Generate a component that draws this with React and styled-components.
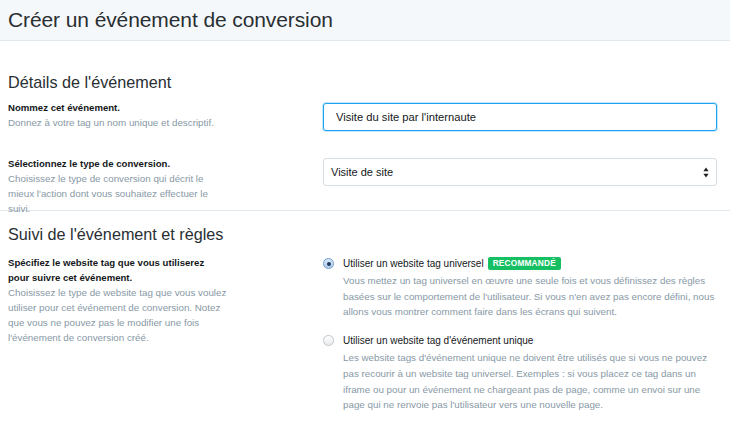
import React from 'react';
import styled, { createGlobalStyle } from 'styled-components';

const GlobalStyle = createGlobalStyle`
  html, body {
    margin: 0;
    padding: 0;
    background: #fff;
  }
  body {
    font-family: "Liberation Sans", Arial, sans-serif;
    color: #14171a;
  }
`;

const Page = styled.div`
  width: 730px;
  height: 423px;
  overflow: hidden;
  background: #fff;
`;

const Header = styled.header`
  height: 41px;
  background: #f5f8fa;
  border-bottom: 1px solid #e1e8ed;
  display: flex;
  align-items: center;
  padding: 0 8px;
  box-sizing: border-box;
`;

const Title = styled.h1`
  margin: 0;
  font-size: 21px;
  font-weight: 400;
  color: #292f33;
  letter-spacing: -0.1px;
`;

const Section = styled.section`
  padding: ${({ $top }) => $top}px 13px 0 8px;
  border-top: ${({ $divided }) => ($divided ? '1px solid #e1e8ed' : 'none')};
  height: ${({ $height }) => ($height ? `${$height}px` : 'auto')};
  box-sizing: border-box;
`;

const SectionTitle = styled.h2`
  margin: 0;
  font-size: 16.2px;
  line-height: 22px;
  font-weight: 400;
  color: #292f33;
`;

const Row = styled.div`
  display: grid;
  grid-template-columns: 315px 1fr;
  margin-top: ${({ $gap }) => $gap}px;
  height: ${({ $height }) => ($height ? `${$height}px` : 'auto')};
`;

const Info = styled.div`
  width: ${({ $width }) => $width}px;
  font-size: 9.8px;
  line-height: 15px;
`;

const Label = styled.div`
  font-weight: 700;
  font-size: 9.6px;
  color: #14171a;
  max-width: ${({ $wrap }) => ($wrap ? `${$wrap}px` : 'none')};
`;

const Hint = styled.div`
  color: #8899a6;
`;

const Field = styled.div`
  margin-top: ${({ $offset }) => $offset}px;
  position: relative;
`;

const Input = styled.input`
  width: 100%;
  height: 28px;
  box-sizing: border-box;
  border: 1px solid #1da1f2;
  border-radius: 3px;
  padding: 0 12px;
  font-family: "Liberation Sans", Arial, sans-serif;
  font-size: 11.2px;
  color: #14171a;
  background: #fff;
  outline: none;
  box-shadow: 0 0 0 1px rgba(29, 161, 242, 0.25);
`;

const SelectBox = styled.div`
  height: 28px;
  box-sizing: border-box;
  border: 1px solid #d6dee4;
  border-radius: 3px;
  padding: 0 7px;
  display: flex;
  align-items: center;
  justify-content: space-between;
  font-size: 11px;
  color: #14171a;
  background: #fff;
`;

const Arrows = styled.svg`
  width: 6px;
  height: 11px;
`;

const Options = styled.div`
  display: flex;
  flex-direction: column;
  gap: 13px;
  margin-top: 1px;
`;

const Option = styled.div`
  display: grid;
  grid-template-columns: 20px 1fr;
`;

const Radio = styled.span`
  width: 11px;
  height: 11px;
  margin-top: 2px;
  border-radius: 50%;
  box-sizing: border-box;
  display: flex;
  align-items: center;
  justify-content: center;
  border: 1px solid ${({ $checked }) => ($checked ? '#6f9fd0' : '#c4c9cd')};
  background: ${({ $checked }) =>
    $checked
      ? 'linear-gradient(#dbe9f7, #aecbeb)'
      : 'linear-gradient(#ffffff, #e8ebed)'};
  box-shadow: 0 0 1px rgba(0, 0, 0, 0.15);

  &::after {
    content: '';
    display: ${({ $checked }) => ($checked ? 'block' : 'none')};
    width: 4px;
    height: 4px;
    border-radius: 50%;
    background: #1c3a5e;
  }
`;

const OptionTitle = styled.div`
  font-size: 10px;
  line-height: 15px;
  color: #14171a;
  display: flex;
  align-items: center;
  gap: 4px;
`;

const Badge = styled.span`
  background: #17bf63;
  color: #fff;
  font-size: 8.3px;
  font-weight: 700;
  letter-spacing: 0.2px;
  line-height: 13px;
  padding: 0 5px;
  border-radius: 2px;
`;

const OptionText = styled.div`
  font-size: 9.8px;
  line-height: 15.7px;
  color: #8899a6;
  margin-top: 2px;
`;

const App = () => (
  <Page>
    <GlobalStyle />
    <Header>
      <Title>Créer un événement de conversion</Title>
    </Header>

    <Section $top={30} $height={169}>
      <SectionTitle>Détails de l'événement</SectionTitle>
      <Row $gap={7}>
        <Info $width={230}>
          <Label>Nommez cet événement.</Label>
          <Hint>Donnez à votre tag un nom unique et descriptif.</Hint>
        </Info>
        <Field $offset={3}>
          <Input defaultValue="Visite du site par l'internaute" readOnly />
        </Field>
      </Row>
      <Row $gap={25} $height={30}>
        <Info $width={215}>
          <Label>Sélectionnez le type de conversion.</Label>
          <Hint>
            Choisissez le type de conversion qui décrit le mieux l'action dont vous souhaitez
            effectuer le suivi.
          </Hint>
        </Info>
        <Field $offset={2}>
          <SelectBox>
            Visite de site
            <Arrows viewBox="0 0 6 11">
              <path d="M3 0.5 L5.6 4.3 H0.4 Z" fill="#222" />
              <path d="M3 10.5 L5.6 6.7 H0.4 Z" fill="#222" />
            </Arrows>
          </SelectBox>
        </Field>
      </Row>
    </Section>

    <Section $top={12} $divided>
      <SectionTitle>Suivi de l'événement et règles</SectionTitle>
      <Row $gap={10}>
        <Info $width={228}>
          <Label $wrap={205}>
            Spécifiez le website tag que vous utiliserez pour suivre cet événement.
          </Label>
          <Hint>
            Choisissez le type de website tag que vous voulez utiliser pour cet événement de
            conversion. Notez que vous ne pouvez pas le modifier une fois l'événement de
            conversion créé.
          </Hint>
        </Info>
        <Options>
          <Option>
            <Radio $checked />
            <div>
              <OptionTitle>
                Utiliser un website tag universel
                <Badge>RECOMMANDÉ</Badge>
              </OptionTitle>
              <OptionText>
                Vous mettez un tag universel en œuvre une seule fois et vous définissez des règles
                basées sur le comportement de l'utilisateur. Si vous n'en avez pas encore défini,
                nous allons vous montrer comment faire dans les écrans qui suivent.
              </OptionText>
            </div>
          </Option>
          <Option>
            <Radio />
            <div>
              <OptionTitle>Utiliser un website tag d'événement unique</OptionTitle>
              <OptionText>
                Les website tags d'événement unique ne doivent être utilisés que si vous ne pouvez
                pas recourir à un website tag universel. Exemples : si vous placez ce tag dans un
                iframe ou pour un événement ne chargeant pas de page, comme un envoi sur une page
                qui ne renvoie pas l'utilisateur vers une nouvelle page.
              </OptionText>
            </div>
          </Option>
        </Options>
      </Row>
    </Section>
  </Page>
);

export default App;
